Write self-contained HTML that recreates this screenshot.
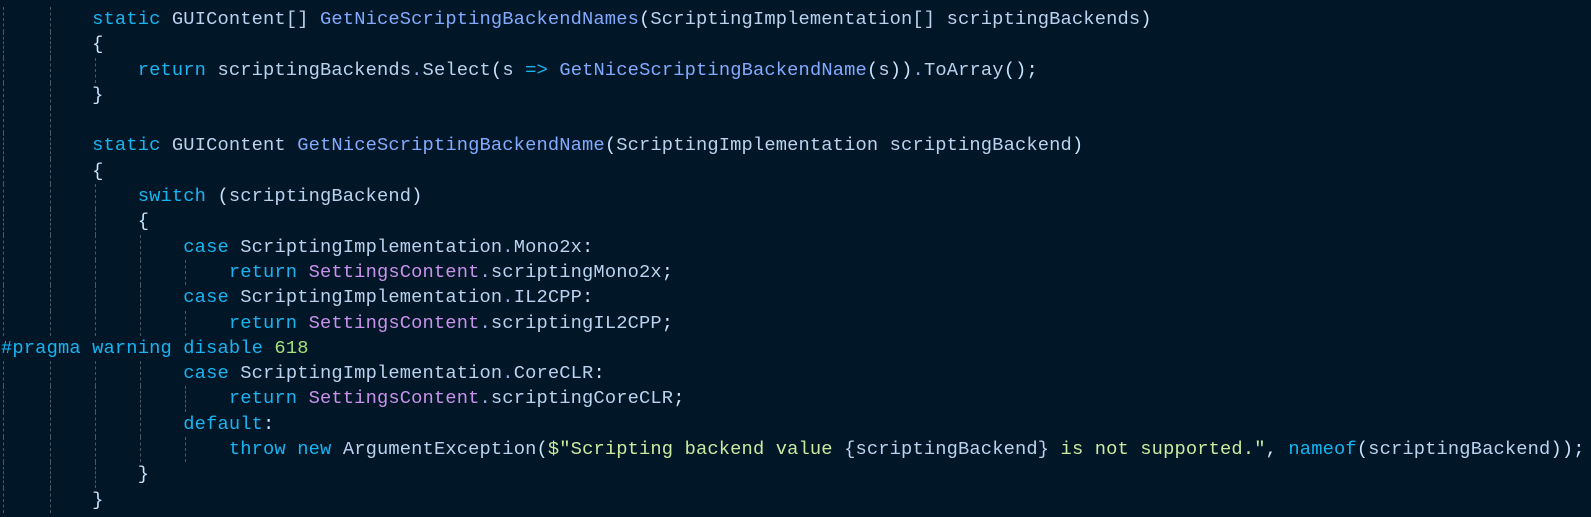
<!DOCTYPE html>
<html><head><meta charset="utf-8"><style>
html,body{margin:0;padding:0;background:#011627;width:1591px;height:517px;overflow:hidden}
#c{position:absolute;left:1px;top:7px;font-family:"Liberation Mono",monospace;font-size:18.75px;letter-spacing:0.14px;color:#c5e4fd}
.l{position:relative;height:25.3px;line-height:25px;white-space:pre}
.g{position:absolute;top:0;height:25.3px;width:0;border-left:1px dashed #4a5866}
.k{color:#18b4f0}.t{color:#b9d3ee}.m{color:#82aaff}.p{color:#8fb0e0}.s{color:#c792ea}.str{color:#c8eba0}.n{color:#a5e07a}.pr{color:#18b4f0}
</style></head><body><div id="c">
<div class="l"><span class="g" style="left:2px"></span><span class="g" style="left:49px"></span>        <span class="k">static</span> <span class="t">GUIContent[]</span> <span class="m">GetNiceScriptingBackendNames</span>(<span class="t">ScriptingImplementation[]</span> <span class="t">scriptingBackends</span>)</div>
<div class="l"><span class="g" style="left:2px"></span><span class="g" style="left:49px"></span>        {</div>
<div class="l"><span class="g" style="left:2px"></span><span class="g" style="left:49px"></span><span class="g" style="left:94px"></span>            <span class="k">return</span> <span class="t">scriptingBackends</span><span class="p">.</span><span class="t">Select</span>(<span class="t">s</span> <span class="k">=&gt;</span> <span class="m">GetNiceScriptingBackendName</span>(<span class="t">s</span>))<span class="p">.</span><span class="t">ToArray</span>();</div>
<div class="l"><span class="g" style="left:2px"></span><span class="g" style="left:49px"></span>        }</div>
<div class="l"><span class="g" style="left:2px"></span><span class="g" style="left:49px"></span></div>
<div class="l"><span class="g" style="left:2px"></span><span class="g" style="left:49px"></span>        <span class="k">static</span> <span class="t">GUIContent</span> <span class="m">GetNiceScriptingBackendName</span>(<span class="t">ScriptingImplementation</span> <span class="t">scriptingBackend</span>)</div>
<div class="l"><span class="g" style="left:2px"></span><span class="g" style="left:49px"></span>        {</div>
<div class="l"><span class="g" style="left:2px"></span><span class="g" style="left:49px"></span><span class="g" style="left:94px"></span>            <span class="k">switch</span> (<span class="t">scriptingBackend</span>)</div>
<div class="l"><span class="g" style="left:2px"></span><span class="g" style="left:49px"></span><span class="g" style="left:94px"></span>            {</div>
<div class="l"><span class="g" style="left:2px"></span><span class="g" style="left:49px"></span><span class="g" style="left:94px"></span><span class="g" style="left:139px"></span>                <span class="k">case</span> <span class="t">ScriptingImplementation</span><span class="p">.</span><span class="t">Mono2x</span>:</div>
<div class="l"><span class="g" style="left:2px"></span><span class="g" style="left:49px"></span><span class="g" style="left:94px"></span><span class="g" style="left:139px"></span><span class="g" style="left:184px"></span>                    <span class="k">return</span> <span class="s">SettingsContent</span><span class="p">.</span><span class="t">scriptingMono2x</span>;</div>
<div class="l"><span class="g" style="left:2px"></span><span class="g" style="left:49px"></span><span class="g" style="left:94px"></span><span class="g" style="left:139px"></span>                <span class="k">case</span> <span class="t">ScriptingImplementation</span><span class="p">.</span><span class="t">IL2CPP</span>:</div>
<div class="l"><span class="g" style="left:2px"></span><span class="g" style="left:49px"></span><span class="g" style="left:94px"></span><span class="g" style="left:139px"></span><span class="g" style="left:184px"></span>                    <span class="k">return</span> <span class="s">SettingsContent</span><span class="p">.</span><span class="t">scriptingIL2CPP</span>;</div>
<div class="l"><span class="pr">#pragma warning disable</span> <span class="n">618</span></div>
<div class="l"><span class="g" style="left:2px"></span><span class="g" style="left:49px"></span><span class="g" style="left:94px"></span><span class="g" style="left:139px"></span>                <span class="k">case</span> <span class="t">ScriptingImplementation</span><span class="p">.</span><span class="t">CoreCLR</span>:</div>
<div class="l"><span class="g" style="left:2px"></span><span class="g" style="left:49px"></span><span class="g" style="left:94px"></span><span class="g" style="left:139px"></span><span class="g" style="left:184px"></span>                    <span class="k">return</span> <span class="s">SettingsContent</span><span class="p">.</span><span class="t">scriptingCoreCLR</span>;</div>
<div class="l"><span class="g" style="left:2px"></span><span class="g" style="left:49px"></span><span class="g" style="left:94px"></span><span class="g" style="left:139px"></span>                <span class="k">default</span>:</div>
<div class="l"><span class="g" style="left:2px"></span><span class="g" style="left:49px"></span><span class="g" style="left:94px"></span><span class="g" style="left:139px"></span><span class="g" style="left:184px"></span>                    <span class="k">throw</span> <span class="k">new</span> <span class="t">ArgumentException</span>(<span class="str">$"Scripting backend value </span><span class="t">{scriptingBackend}</span><span class="str"> is not supported."</span>, <span class="k">nameof</span>(<span class="t">scriptingBackend</span>));</div>
<div class="l"><span class="g" style="left:2px"></span><span class="g" style="left:49px"></span><span class="g" style="left:94px"></span>            }</div>
<div class="l"><span class="g" style="left:2px"></span><span class="g" style="left:49px"></span>        }</div>
</div></body></html>
